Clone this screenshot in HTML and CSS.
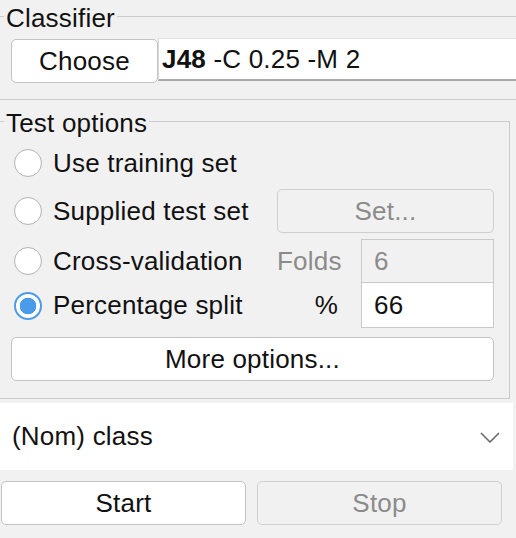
FILE: index.html
```html
<!DOCTYPE html>
<html lang="en">
<head>
<meta charset="utf-8">
<title>Classifier</title>
<link rel="stylesheet" href="styles.css">
</head>
<body>
<div class="panel">
  <fieldset class="group group-classifier">
    <legend class="group-title">Classifier</legend>
    <div class="classifier-row">
      <button class="btn btn-choose" type="button">Choose</button>
      <div class="field field-scheme"><span><b>J48</b> -C 0.25 -M 2</span></div>
    </div>
  </fieldset>

  <fieldset class="group group-test">
    <legend class="group-title">Test options</legend>
    <div class="opt-row row-1">
      <span class="radio"></span><span class="opt-label">Use training set</span>
    </div>
    <div class="opt-row row-2">
      <span class="radio"></span><span class="opt-label">Supplied test set</span>
      <div class="opt-side">
        <button class="btn btn-set is-disabled" type="button">Set...</button>
      </div>
    </div>
    <div class="opt-row row-3">
      <span class="radio"></span><span class="opt-label">Cross-validation</span>
      <div class="opt-side">
        <span class="param-label is-muted">Folds</span>
        <div class="field field-param is-disabled">6</div>
      </div>
    </div>
    <div class="opt-row row-4">
      <span class="radio is-checked"></span><span class="opt-label">Percentage split</span>
      <div class="opt-side">
        <span class="param-label">%</span>
        <div class="field field-param">66</div>
      </div>
    </div>
    <button class="btn btn-more" type="button">More options...</button>
  </fieldset>

  <div class="combo">
    <span class="combo-text">(Nom) class</span>
    <svg class="combo-arrow" width="20" height="11" viewBox="0 0 20 11"><polyline points="1,1 10,10 19,1" fill="none" stroke="#6a6a6a" stroke-width="1.6"/></svg>
  </div>

  <div class="run-row">
    <button class="btn btn-run" type="button">Start</button>
    <button class="btn btn-run is-disabled" type="button">Stop</button>
  </div>
</div>
</body>
</html>
```

FILE: styles.css
```css
html, body {
  margin: 0;
  padding: 0;
  background: #f1f1f1;
  overflow: hidden;
}

body {
  font-family: "Liberation Sans", Arial, sans-serif;
  font-size: 26px;
  letter-spacing: 0.2px;
  color: #111;
  width: 516px;
  height: 538px;
}

.panel {
  display: flex;
  flex-direction: column;
}

.group {
  margin: 0;
  min-width: 0;
  border: 1px solid #cbcbcb;
  border-left: none;
}

.group-title {
  padding: 3px 2px 0;
  line-height: 30px;
  font-size: 26px;
}

.group-classifier {
  border-right: none;
  padding: 5px 0 16px 4px;
}

.classifier-row {
  display: flex;
  align-items: flex-start;
}

.btn {
  font-family: inherit;
  font-size: 26px;
  letter-spacing: inherit;
  color: #111;
  background: #fff;
  border: 1px solid #c4c4c4;
  border-radius: 5px;
  box-sizing: border-box;
  padding: 0;
  margin: 0;
  line-height: 1;
}

.btn.is-disabled {
  background: #f1f1f1;
  color: #8b8b8b;
  border-color: #cfcfcf;
}

.btn-choose {
  margin-left: 7px;
  margin-top: 1px;
  width: 147px;
  height: 44px;
}

.field {
  box-sizing: border-box;
  background: #fff;
  display: flex;
  align-items: center;
}

.field-scheme {
  flex: 1;
  height: 43px;
  padding-left: 3px;
  border-top: 1px solid #e2e2e2;
  border-left: 1px solid #d8d8d8;
  border-bottom: 2px solid #a9a9a9;
}

.group-test {
  margin: 5px 6px 0 0;
  padding: 2px 15px 17px 4px;
}

.opt-row {
  display: flex;
  align-items: center;
  padding-left: 10px;
}

.row-1 { height: 46px; }
.row-2 { height: 44px; margin-top: 3px; }
.row-3 { height: 44px; margin-top: 6px; }
.row-4 { height: 45px; }

.radio {
  width: 28px;
  height: 28px;
  box-sizing: border-box;
  border-radius: 50%;
  border: 1.5px solid #b2b2b2;
  background: #fff;
  flex: none;
}

.radio.is-checked {
  border: 2px solid #4a9cea;
  background: radial-gradient(circle, #4a9cea 0, #4a9cea 8px, #fff 8.6px);
}

.opt-label {
  margin-left: 11px;
}

.opt-side {
  margin-left: auto;
  display: flex;
  align-items: center;
  height: 100%;
}

.btn-set {
  width: 217px;
  height: 44px;
}

.param-label {
  width: 84px;
  box-sizing: border-box;
  padding-right: 23px;
  text-align: right;
}

.param-label.is-muted {
  color: #8b8b8b;
}

.field-param {
  width: 133px;
  height: 100%;
  padding-left: 12px;
  border: 1px solid #c9c9c9;
}

.row-4 .field-param {
  border-top: none;
}

.field-param.is-disabled {
  background: #f1f1f1;
  color: #8b8b8b;
}

.btn-more {
  margin: 9px 0 0 7px;
  width: calc(100% - 7px);
  height: 44px;
}

.combo {
  margin: 4px 3px 0 0;
  height: 67px;
  background: #fff;
  display: flex;
  align-items: center;
  padding-left: 12px;
}

.combo-arrow {
  margin-left: auto;
  margin-right: 13px;
  margin-top: 2px;
}

.run-row {
  display: flex;
  gap: 11px;
  margin-top: 11px;
  padding-left: 1px;
}

.btn-run {
  width: 245px;
  height: 44px;
}
```
